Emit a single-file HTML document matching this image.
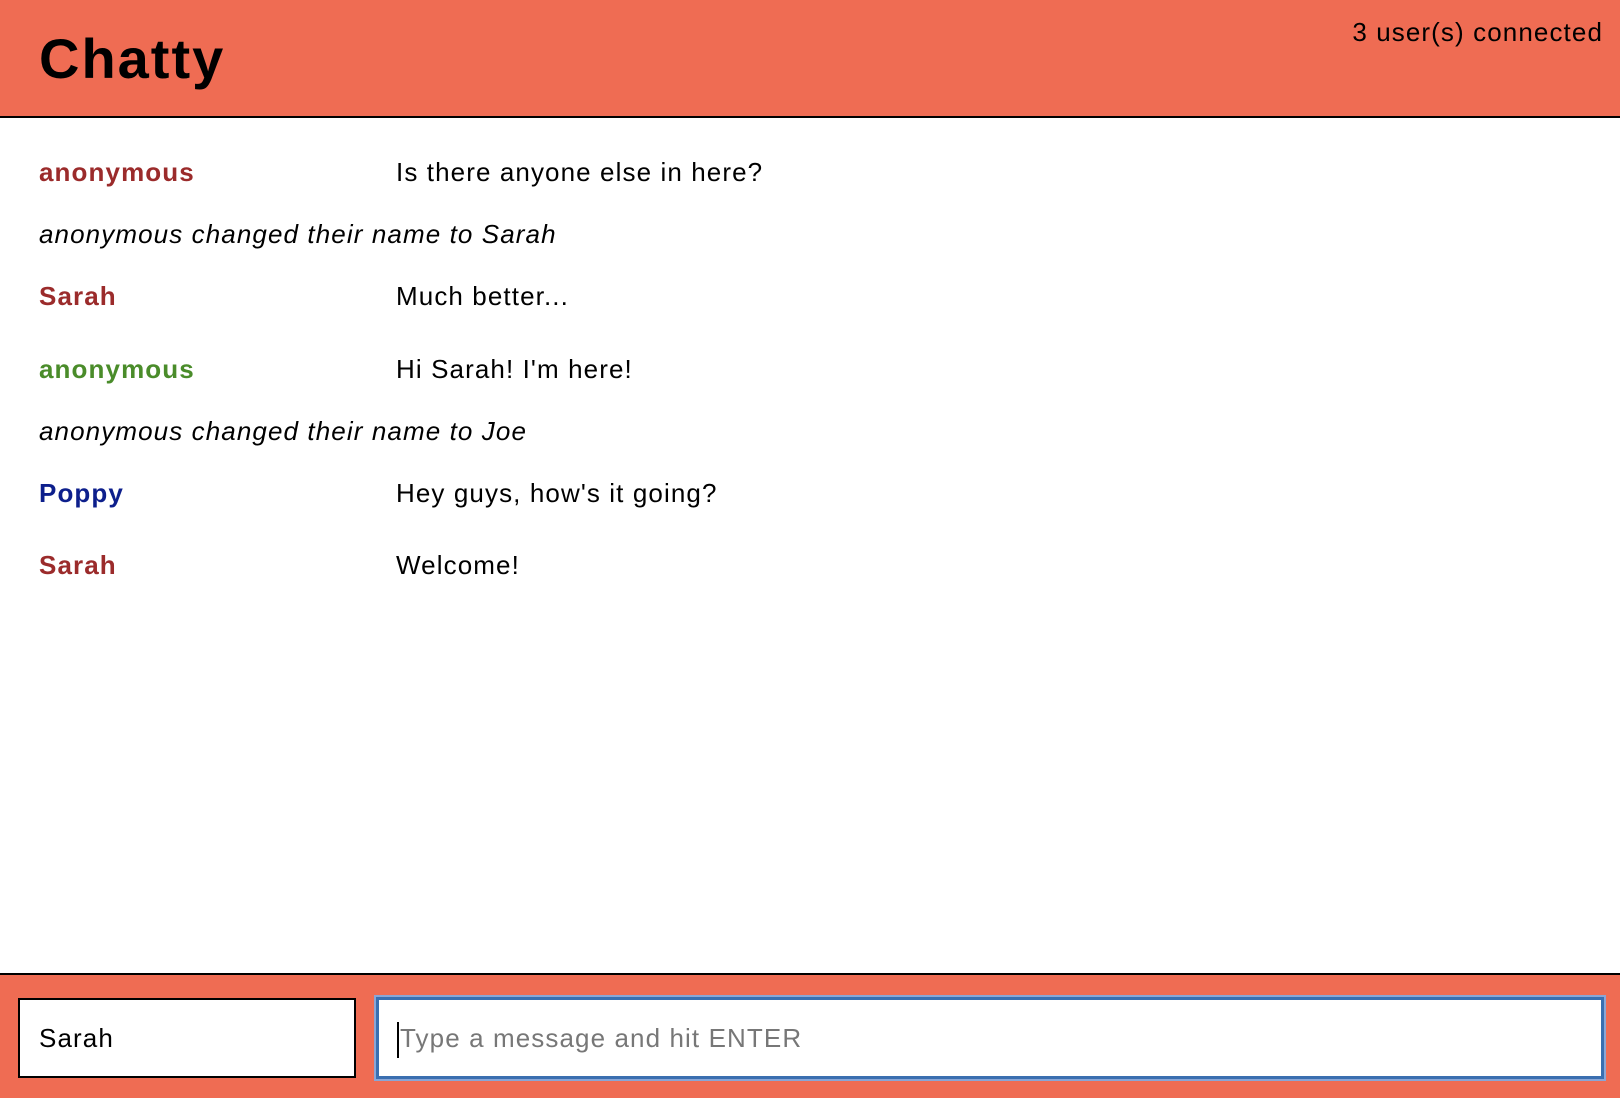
<!DOCTYPE html>
<html><head><style>
body{margin:0;width:1620px;height:1096px;font-family:"Liberation Sans",sans-serif;background:#fff;position:relative;overflow:hidden}
.hdr{position:absolute;left:0;top:0;width:1620px;height:116px;background:#ef6c53;border-bottom:2px solid #000}
.hdr h1{position:absolute;left:39px;top:24px;margin:0;font-size:56px;line-height:70px;font-weight:bold;color:#000;letter-spacing:2px}
.hdr .u{position:absolute;right:17px;top:14px;font-size:26px;line-height:36px;letter-spacing:1.1px}
.r{position:absolute;left:39px;font-size:26px;line-height:34px;white-space:nowrap;letter-spacing:1.1px}
.n{font-weight:bold;display:inline-block;width:357px}
.sys{font-style:italic}
.ft{position:absolute;left:0;top:973px;width:1620px;height:123px;background:#ef6c53;border-top:2px solid #000}
.i1{position:absolute;left:18px;top:23px;width:338px;height:80px;background:#fff;border:2px solid #000;box-sizing:border-box;font-size:26px;line-height:76px;padding-left:19px;letter-spacing:1.1px}
.i2{position:absolute;left:376px;top:22px;width:1228px;height:82px;background:#fff;border:3px solid #3a6fb0;box-shadow:0 0 0 2px #8aa6d6;box-sizing:border-box;font-size:26px;line-height:76px;padding-left:18px;color:#777;letter-spacing:1.1px}
.cur{display:inline-block;width:2px;height:36px;background:#000;vertical-align:middle;margin-right:1px}
</style></head><body>
<div class="hdr"><h1>Chatty</h1><div class="u">3 user(s) connected</div></div>
<div class="r" style="top:155px"><span class="n" style="color:#9b2b2b">anonymous</span>Is there anyone else in here?</div>
<div class="r sys" style="top:217px">anonymous changed their name to Sarah</div>
<div class="r" style="top:279px"><span class="n" style="color:#9b2b2b">Sarah</span>Much better...</div>
<div class="r" style="top:352px"><span class="n" style="color:#4a8c2a">anonymous</span>Hi Sarah! I'm here!</div>
<div class="r sys" style="top:414px">anonymous changed their name to Joe</div>
<div class="r" style="top:476px"><span class="n" style="color:#0d1f8c">Poppy</span>Hey guys, how's it going?</div>
<div class="r" style="top:548px"><span class="n" style="color:#9b2b2b">Sarah</span>Welcome!</div>
<div class="ft"><div class="i1">Sarah</div><div class="i2"><span class="cur"></span>Type a message and hit ENTER</div></div>
</body></html>
